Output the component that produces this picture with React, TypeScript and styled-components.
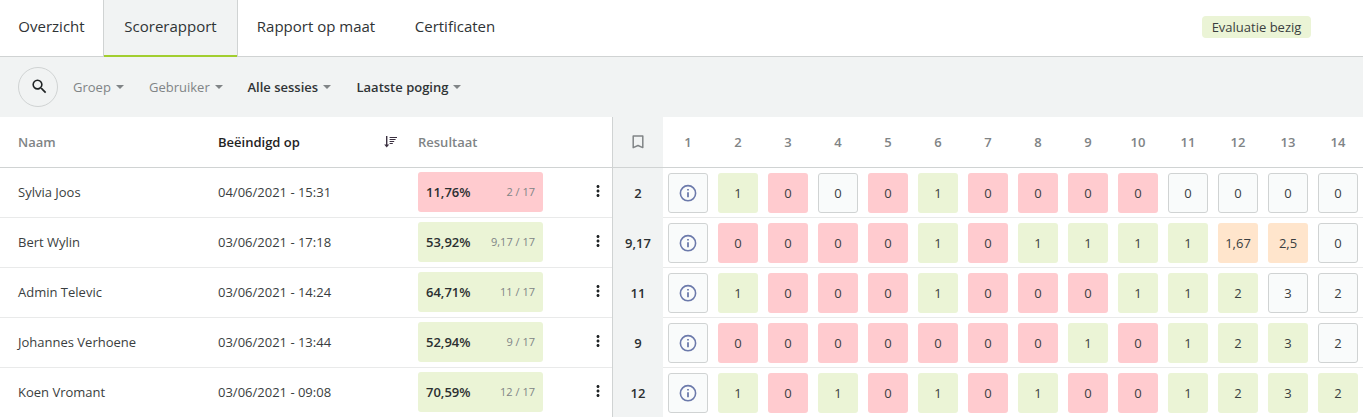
import React from "react";
import styled, { createGlobalStyle } from "styled-components";
import { MdMoreVert, MdSearch } from "react-icons/md";

const GlobalStyle = createGlobalStyle`
  *, *::before, *::after { box-sizing: border-box; }
  html, body { margin: 0; padding: 0; overflow: hidden; background: #fff; }
  body {
    font-family: "Open Sans", "Noto Sans", sans-serif;
    font-size: 13px;
    line-height: 20px;
    color: #3a3e40;
  }
  svg { display: block; }
`;

const Page = styled.div`
  width: 1363px;
  height: 417px;
  overflow: hidden;
`;

const TabBar = styled.header`
  display: flex;
  height: 57px;
  border-bottom: 1px solid #d0d3d3;
`;

const Tab = styled.div<{ $active?: boolean; $width: number }>`
  width: ${(p) => p.$width}px;
  height: 57px;
  display: flex;
  justify-content: center;
  padding-top: 16px;
  font-size: 15px;
  white-space: nowrap;
  color: #2f3335;
  border: 1px solid transparent;
  border-width: 0 1px;
  ${(p) =>
    p.$active &&
    `
    background: #f1f3f3;
    border-color: #d0d3d3;
    box-shadow: inset 0 -2px 0 #a2ce2f;
  `}
`;

const Status = styled.div`
  margin: 16px 52px 0 auto;
  width: 109px;
  height: 22px;
  border-radius: 4px;
  background: #ebf4d6;
  line-height: 22px;
  text-align: center;
  white-space: nowrap;
`;

const FilterBar = styled.div`
  display: flex;
  align-items: center;
  height: 60px;
  padding-left: 18px;
  background: #f1f3f3;
`;

const SearchButton = styled.button`
  display: flex;
  align-items: center;
  justify-content: center;
  width: 40px;
  height: 40px;
  margin-right: 15px;
  padding: 0 0 2px 2px;
  border: 1px solid #d0d3d3;
  border-radius: 50%;
  background: transparent;
  color: #1f2324;
`;

const Filter = styled.div<{ $strong?: boolean; $width: number }>`
  display: flex;
  align-items: center;
  gap: 5px;
  width: ${(p) => p.$width}px;
  white-space: nowrap;
  font-weight: ${(p) => (p.$strong ? 600 : 400)};
  color: ${(p) => (p.$strong ? "#303436" : "#808486")};
`;

const Table = styled.main`
  display: flex;
`;

const People = styled.section`
  width: 613px;
  border-right: 1px solid #d0d3d3;
`;

const PersonRow = styled.div<{ $head?: boolean }>`
  display: grid;
  grid-template-columns: 200px 200px 125px 1fr;
  align-items: center;
  height: ${(p) => (p.$head ? 51 : 50)}px;
  padding: 0 5px 0 18px;
  border-bottom: 1px solid ${(p) => (p.$head ? "#d0d3d3" : "#e9eaea")};
  white-space: nowrap;
`;

const Cell = styled.div`
  padding-bottom: 2px;
`;

const HeadLabel = styled.div<{ $sorted?: boolean }>`
  display: flex;
  align-items: center;
  justify-content: space-between;
  padding-right: 21px;
  font-weight: 600;
  color: ${(p) => (p.$sorted ? "#1f2324" : "#808486")};
`;

const Result = styled.div<{ $tone: Tone }>`
  display: flex;
  align-items: center;
  justify-content: space-between;
  height: 40px;
  margin-bottom: 1px;
  padding: 0 8px;
  border-radius: 3px;
  background: ${(p) => tones[p.$tone]};
`;

const Percent = styled.span`
  font-weight: 600;
  color: #2b2f31;
`;

const Fraction = styled.span`
  font-size: 11px;
  color: #808486;
`;

const MenuButton = styled.div`
  display: flex;
  justify-content: flex-end;
  padding-bottom: 3px;
  color: #1f2324;
`;

const Totals = styled.section`
  width: 50px;
  background: #f1f3f3;
`;

const TotalHead = styled.div`
  display: flex;
  align-items: center;
  justify-content: center;
  height: 51px;
  padding-bottom: 1px;
  border-bottom: 1px solid #d0d3d3;
  color: #808486;
`;

const Total = styled.div`
  display: flex;
  align-items: center;
  justify-content: center;
  height: 50px;
  font-weight: 600;
  color: #2b2f31;
`;

const Questions = styled.section`
  width: 700px;
`;

const QuestionRow = styled.div<{ $head?: boolean }>`
  display: grid;
  grid-template-columns: repeat(14, 50px);
  align-items: center;
  justify-items: center;
  height: ${(p) => (p.$head ? 51 : 50)}px;
  padding-top: ${(p) => (p.$head ? 0 : 1)}px;
  border-bottom: 1px solid ${(p) => (p.$head ? "#d0d3d3" : "#e9eaea")};
`;

const QuestionNumber = styled.div`
  font-weight: 600;
  color: #808486;
`;

const Score = styled.div<{ $tone: Tone }>`
  display: flex;
  align-items: center;
  justify-content: center;
  width: 40px;
  height: 40px;
  border: 1px solid ${(p) => (p.$tone === "n" ? "#d0d3d3" : "transparent")};
  border-radius: 3px;
  background: ${(p) => tones[p.$tone]};
`;

type Tone = "g" | "r" | "o" | "n";

const tones: Record<Tone, string> = {
  g: "#ebf4d6",
  r: "#ffcbcf",
  o: "#ffe5cc",
  n: "#f9fbfb",
};

type Person = {
  name: string;
  ended: string;
  percent: string;
  total: string;
  tone: Tone;
  scores: string[];
  marks: string;
};

const people: Person[] = [
  { name: "Sylvia Joos", ended: "04/06/2021 - 15:31", percent: "11,76%", total: "2", tone: "r",
    scores: ["1", "0", "0", "0", "1", "0", "0", "0", "0", "0", "0", "0", "0"], marks: "grnrgrrrrnnnn" },
  { name: "Bert Wylin", ended: "03/06/2021 - 17:18", percent: "53,92%", total: "9,17", tone: "g",
    scores: ["0", "0", "0", "0", "1", "0", "1", "1", "1", "1", "1,67", "2,5", "0"], marks: "rrrrgrggggoon" },
  { name: "Admin Televic", ended: "03/06/2021 - 14:24", percent: "64,71%", total: "11", tone: "g",
    scores: ["1", "0", "0", "0", "1", "0", "0", "0", "1", "1", "2", "3", "2"], marks: "grrrgrrrgggnn" },
  { name: "Johannes Verhoene", ended: "03/06/2021 - 13:44", percent: "52,94%", total: "9", tone: "g",
    scores: ["0", "0", "0", "0", "0", "0", "0", "1", "0", "1", "2", "3", "2"], marks: "rrrrrrrgrgggn" },
  { name: "Koen Vromant", ended: "03/06/2021 - 09:08", percent: "70,59%", total: "12", tone: "g",
    scores: ["1", "0", "1", "0", "1", "0", "1", "0", "0", "1", "2", "3", "2"], marks: "grgrgrgrrgggg" },
];

const Caret = () => (
  <svg width="8" height="4" viewBox="0 0 8 4" fill="#808486">
    <path d="M0 0h8L4 4z" />
  </svg>
);

const SortIcon = () => (
  <svg width="13" height="12" viewBox="0 0 13 12" fill="none" stroke="#3b3040" strokeWidth="1.2">
    <path d="M2.7 0v9.5" strokeWidth="1.4" />
    <path d="M0.2 8.6h5L2.7 11.4z" fill="#3b3040" stroke="none" />
    <path d="M5.6 1.5H13M5.6 3.5h6M5.6 5.5h4.6M5.6 7.5h3.2" strokeWidth="1" />
  </svg>
);

const BookmarkIcon = () => (
  <svg width="12" height="14" viewBox="0 0 12 14" fill="none" stroke="currentColor" strokeWidth="1.5">
    <path d="M1.2 0.9h9.6v11.7L6 10.5l-4.8 2.1z" strokeLinejoin="round" />
  </svg>
);

const InfoIcon = () => (
  <svg width="18" height="18" viewBox="0 0 18 18" fill="none" stroke="#6c7aab">
    <circle cx="9" cy="9.2" r="7.6" strokeWidth="1.6" />
    <path d="M9 4.9v1.7M9 8.2v5.1" strokeWidth="1.8" />
  </svg>
);

export default function App() {
  return (
    <Page>
      <GlobalStyle />
      <TabBar>
        <Tab $width={103}>Overzicht</Tab>
        <Tab $width={135} $active>Scorerapport</Tab>
        <Tab $width={156}>Rapport op maat</Tab>
        <Tab $width={122}>Certificaten</Tab>
        <Status>Evaluatie bezig</Status>
      </TabBar>
      <FilterBar>
        <SearchButton aria-label="Zoeken"><MdSearch size={19} /></SearchButton>
        <Filter $width={76}>Groep<Caret /></Filter>
        <Filter $width={98.5}>Gebruiker<Caret /></Filter>
        <Filter $width={109} $strong>Alle sessies<Caret /></Filter>
        <Filter $width={109} $strong>Laatste poging<Caret /></Filter>
      </FilterBar>
      <Table>
        <People>
          <PersonRow $head>
            <HeadLabel>Naam</HeadLabel>
            <HeadLabel $sorted>Beëindigd op<SortIcon /></HeadLabel>
            <HeadLabel>Resultaat</HeadLabel>
          </PersonRow>
          {people.map((p) => (
            <PersonRow key={p.name}>
              <Cell>{p.name}</Cell>
              <Cell>{p.ended}</Cell>
              <Result $tone={p.tone}>
                <Percent>{p.percent}</Percent>
                <Fraction>{p.total} / 17</Fraction>
              </Result>
              <MenuButton><MdMoreVert size={18} /></MenuButton>
            </PersonRow>
          ))}
        </People>
        <Totals>
          <TotalHead><BookmarkIcon /></TotalHead>
          {people.map((p) => <Total key={p.name}>{p.total}</Total>)}
        </Totals>
        <Questions>
          <QuestionRow $head>
            {Array.from({ length: 14 }, (_, i) => <QuestionNumber key={i}>{i + 1}</QuestionNumber>)}
          </QuestionRow>
          {people.map((p) => (
            <QuestionRow key={p.name}>
              <Score $tone="n"><InfoIcon /></Score>
              {p.scores.map((s, i) => <Score key={i} $tone={p.marks[i] as Tone}>{s}</Score>)}
            </QuestionRow>
          ))}
        </Questions>
      </Table>
    </Page>
  );
}
